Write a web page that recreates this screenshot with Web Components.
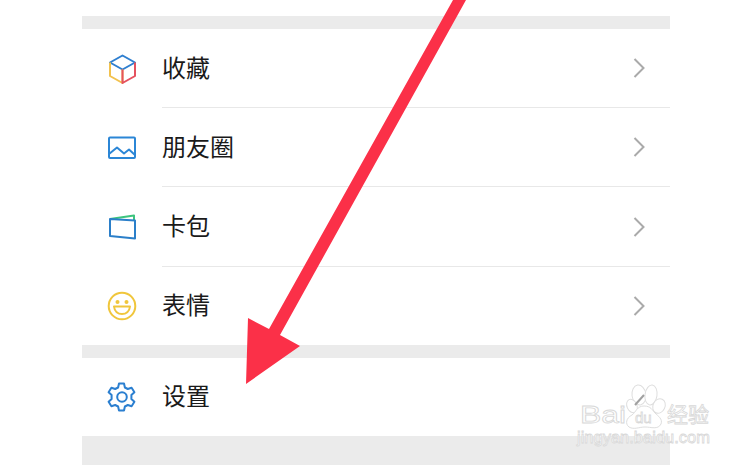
<!DOCTYPE html>
<html lang="zh">
<head>
<meta charset="utf-8">
<style>
    html, body { margin: 0; background: #fff; height: 465px; overflow: hidden; }
    body { font-family: "Noto Sans CJK SC", "Noto Sans", sans-serif; color: #222; }
</style>
</head>
<body>
<settings-page>
    <menu-band height="16" color="#fff"></menu-band>
    <menu-band height="13"></menu-band>
    <menu-row label="收藏" height="79" divider>
        <svg slot="icon" width="32" height="32" viewBox="0 0 32 32" fill="none" stroke-width="2" stroke-linejoin="round">
            <path d="M4 9.500 16.500 16.500 29 9.500 16.500 2.500Z" stroke="#2f7fd0"/>
            <path d="M4 9.500V23L16.500 30V16.500" stroke="#f2c24f"/>
            <path d="M16.500 16.500V30L29 23V9.500" stroke="#e5525f"/>
        </svg>
    </menu-row>
    <menu-row label="朋友圈" height="79" divider>
        <svg slot="icon" width="32" height="32" viewBox="0 0 32 32" fill="none" stroke="#2b86d6" stroke-width="2" stroke-linejoin="round">
            <rect x="3" y="5.500" width="26" height="20.500" rx="1"/>
            <path d="M3 22 11 15.500 18 21.500 23 17.500 29 23"/>
        </svg>
    </menu-row>
    <menu-row label="卡包" height="80" divider>
        <svg slot="icon" width="32" height="32" viewBox="0 0 32 32" fill="none" stroke-width="2" stroke-linejoin="round">
            <path d="M4 8 28 4.500V9" stroke="#3dc47e"/>
            <path d="M4 8 29 9.500V27.500L4 25Z" stroke="#2b7fc9"/>
        </svg>
    </menu-row>
    <menu-row label="表情" height="78">
        <svg slot="icon" width="32" height="32" viewBox="0 0 32 32" fill="none" stroke="#f0c63c" stroke-width="2">
            <circle cx="16" cy="16" r="13.300"/>
            <circle cx="11.500" cy="12" r="2" fill="#f0c63c" stroke="none"/>
            <circle cx="20.500" cy="12" r="2" fill="#f0c63c" stroke="none"/>
            <path d="M8 16.500H24C23.500 21.500 20 24 16 24S8.500 21.500 8 16.500Z" stroke-linejoin="round"/>
        </svg>
    </menu-row>
    <menu-band height="13"></menu-band>
    <menu-row label="设置" height="78">
        <svg slot="icon" width="32" height="32" viewBox="0 0 32 32" fill="none" stroke="#2b7fd0" stroke-width="2" stroke-linejoin="round">
            <circle cx="16" cy="16" r="4.800"/>
            <path d="M13 2.500H18L18.900 6.500 21.800 8 25.600 6.700 28.400 11.200 25.400 14V18L28.400 20.800 25.600 25.300 21.800 24 18.900 25.500 18 29.500H13L12.100 25.500 9.200 24 5.400 25.300 2.600 20.800 5.600 18V14L2.600 11.200 5.400 6.700 9.200 8 12.100 6.500Z"/>
        </svg>
    </menu-row>
    <menu-band height="29"></menu-band>
</settings-page>
<red-arrow></red-arrow>
<jingyan-mark></jingyan-mark>

<script>
class SettingsPage extends HTMLElement {
    constructor() {
        super();
        this.attachShadow({ mode: 'open' });
        this.shadowRoot.innerHTML = `
            <style>
                :host {
                    display: flex;
                    flex-direction: column;
                    width: 588px;
                    margin-left: 82px;
                }
            </style>
            <slot></slot>
        `;
    }
}

class MenuBand extends HTMLElement {
    constructor() {
        super();
        this.attachShadow({ mode: 'open' });
        const height = this.getAttribute('height') || 13;
        const color = this.getAttribute('color') || '#ebebeb';
        this.shadowRoot.innerHTML = `
            <style>
                :host {
                    display: block;
                    height: ${height}px;
                    background: ${color};
                }
            </style>
        `;
    }
}

class MenuRow extends HTMLElement {
    constructor() {
        super();
        this.attachShadow({ mode: 'open' });
        const height = this.getAttribute('height') || 79;
        this.shadowRoot.innerHTML = `
            <style>
                :host {
                    display: block;
                    background: #fff;
                }
                .row {
                    display: flex;
                    align-items: center;
                    height: ${height}px;
                    box-sizing: border-box;
                    padding: 0 25px 0 24px;
                }
                .icon {
                    display: flex;
                    width: 32px;
                    height: 32px;
                    margin-right: 24px;
                }
                .label {
                    flex: 1;
                    font-size: 24px;
                    line-height: 32px;
                    padding-bottom: 4px;
                    color: #1a1a1a;
                }
                .chevron {
                    display: block;
                    margin-bottom: 1px;
                }
                :host([divider]) .row {
                    position: relative;
                }
                .line {
                    display: none;
                    position: absolute;
                    left: 80px;
                    right: 0;
                    bottom: 0;
                    height: 1px;
                    background: #e8e8e8;
                }
                :host([divider]) .line {
                    display: block;
                }
            </style>
            <div class="row">
                <div class="icon"><slot name="icon"></slot></div>
                <div class="label">${this.getAttribute('label')}</div>
                <svg class="chevron" width="12" height="20" viewBox="0 0 12 20" fill="none" stroke="#aaa" stroke-width="2">
                    <path d="M1.500 1 10.500 10 1.500 19"/>
                </svg>
                <div class="line"></div>
            </div>
        `;
    }
}

class RedArrow extends HTMLElement {
    constructor() {
        super();
        this.attachShadow({ mode: 'open' });
        this.shadowRoot.innerHTML = `
            <style>
                :host {
                    position: absolute;
                    left: 0;
                    top: 0;
                    display: block;
                    width: 752px;
                    height: 465px;
                }
                svg { display: block; }
            </style>
            <svg width="752" height="465" viewBox="0 0 752 465">
                <path d="M453 0H466L280 335 300 346 246 384 248 318 269 329Z" fill="#fb3048"/>
            </svg>
        `;
    }
}

class JingyanMark extends HTMLElement {
    constructor() {
        super();
        this.attachShadow({ mode: 'open' });
        this.shadowRoot.innerHTML = `
            <style>
                :host {
                    position: absolute;
                    left: 570px;
                    top: 375px;
                    display: block;
                    width: 150px;
                    height: 80px;
                }
                svg { display: block; overflow: visible; }
                text {
                    fill: #fff;
                    stroke: #d8d8d8;
                    stroke-width: .8px;
                    font-family: "Liberation Sans", sans-serif;
                }
                .cn { font-family: "Noto Sans CJK SC", sans-serif; }
                ellipse, .pad { fill: #fff; stroke: #dedede; stroke-width: 1; }
                .gash { fill: none; stroke: #a0a0a0; stroke-width: 2; }
            </style>
            <svg width="150" height="80" viewBox="0 0 150 80">
                <ellipse cx="69" cy="20" rx="7" ry="10" transform="rotate(-8 69 20)"/>
                <ellipse cx="81" cy="20" rx="6" ry="10" transform="rotate(8 81 20)"/>
                <ellipse cx="62" cy="31" rx="5" ry="7" transform="rotate(-25 62 31)"/>
                <ellipse cx="89" cy="31" rx="6" ry="7.500" transform="rotate(25 89 31)"/>
                <path class="gash" d="M74 20 65 30"/>
                <path class="pad" d="M74 31C67 31 66 37 62 40 56 43 55 49 59 52 64 55 69 52 75 52 81 52 88 55 91 49 93 44 88 41 85 38 82 35 81 31 74 31Z"/>
                <text x="10" y="48" font-size="24" textLength="46" lengthAdjust="spacingAndGlyphs">Bai</text>
                <text x="65" y="48" font-size="15">du</text>
                <text class="cn" x="97" y="47" font-size="21">经验</text>
                <text x="7" y="68" font-size="17" textLength="133" lengthAdjust="spacingAndGlyphs">jingyan.baidu.com</text>
            </svg>
        `;
    }
}

window.customElements.define('settings-page', SettingsPage);
window.customElements.define('menu-band', MenuBand);
window.customElements.define('menu-row', MenuRow);
window.customElements.define('red-arrow', RedArrow);
window.customElements.define('jingyan-mark', JingyanMark);
</script>
</body>
</html>
